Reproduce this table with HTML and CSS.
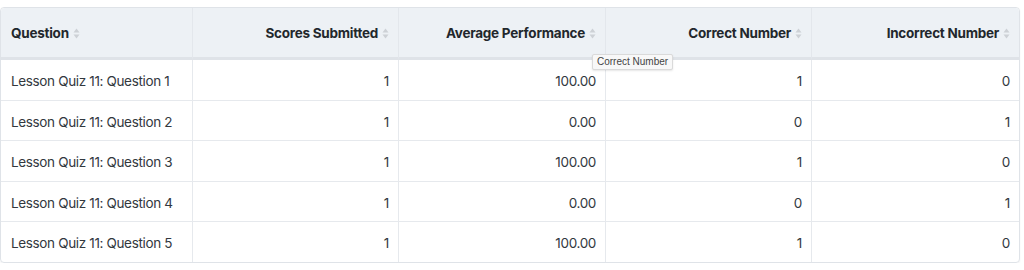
FILE: index.html
```html
<!DOCTYPE html>
<html>
<head>
<meta charset="utf-8">
<link rel="stylesheet" href="styles.css">
</head>
<body>
<div class="wrap">
  <table class="grid">
    <colgroup>
      <col class="c1"><col class="c2"><col class="c3"><col class="c4"><col class="c5">
    </colgroup>
    <thead>
      <tr>
        <th class="left">Question <span class="sort"><svg width="7" height="11" viewBox="0 0 7 11"><path d="M3.5 0.5L6.5 4.5H0.5Z M3.5 10.5L6.5 6.5H0.5Z" fill="#cdd1d6"/></svg></span></th>
        <th>Scores Submitted <span class="sort"><svg width="7" height="11" viewBox="0 0 7 11"><path d="M3.5 0.5L6.5 4.5H0.5Z M3.5 10.5L6.5 6.5H0.5Z" fill="#cdd1d6"/></svg></span></th>
        <th>Average Performance <span class="sort"><svg width="7" height="11" viewBox="0 0 7 11"><path d="M3.5 0.5L6.5 4.5H0.5Z M3.5 10.5L6.5 6.5H0.5Z" fill="#cdd1d6"/></svg></span></th>
        <th class="tipcell">Correct Number <span class="sort"><svg width="7" height="11" viewBox="0 0 7 11"><path d="M3.5 0.5L6.5 4.5H0.5Z M3.5 10.5L6.5 6.5H0.5Z" fill="#cdd1d6"/></svg></span><span class="tooltip">Correct Number</span></th>
        <th>Incorrect Number <span class="sort"><svg width="7" height="11" viewBox="0 0 7 11"><path d="M3.5 0.5L6.5 4.5H0.5Z M3.5 10.5L6.5 6.5H0.5Z" fill="#cdd1d6"/></svg></span></th>
      </tr>
    </thead>
    <tbody>
      <tr><td class="left">Lesson Quiz 11: Question 1</td><td>1</td><td>100.00</td><td>1</td><td>0</td></tr>
      <tr><td class="left">Lesson Quiz 11: Question 2</td><td>1</td><td>0.00</td><td>0</td><td>1</td></tr>
      <tr><td class="left">Lesson Quiz 11: Question 3</td><td>1</td><td>100.00</td><td>1</td><td>0</td></tr>
      <tr><td class="left">Lesson Quiz 11: Question 4</td><td>1</td><td>0.00</td><td>0</td><td>1</td></tr>
      <tr><td class="left">Lesson Quiz 11: Question 5</td><td>1</td><td>100.00</td><td>1</td><td>0</td></tr>
    </tbody>
  </table>
</div>
</body>
</html>
```

FILE: styles.css
```css
html, body {
  margin: 0;
  padding: 0;
  background: #ffffff;
}
body {
  font-family: Inter, "Liberation Sans", sans-serif;
  font-size: 13.5px;
  letter-spacing: -0.35px;
  color: #32383e;
}
.wrap {
  padding: 7px 6px 0 0;
}
.grid {
  width: 1019px;
  border-collapse: separate;
  border-spacing: 0;
  table-layout: fixed;
  border: 1px solid #dfe3e8;
  border-radius: 4px;
  box-shadow: 0 1px 2px rgba(0,0,0,0.06);
}
.c1 { width: 192px; }
.c2 { width: 206px; }
.c3 { width: 207px; }
.c4 { width: 206px; }
.c5 { width: 207px; }
th {
  background: #edf1f5;
  height: 49px;
  padding: 0 9px 0 10px;
  text-align: right;
  font-weight: 700;
  letter-spacing: -0.25px;
  color: #22272c;
  border-bottom: 3px solid #dfe3e8;
  border-right: 1px solid #e3e7ec;
  white-space: nowrap;
}
th:first-child { border-top-left-radius: 4px; }
th:last-child { border-top-right-radius: 4px; border-right: none; }
td {
  height: 36.5px;
  padding: 3px 9px 0 10px;
  text-align: right;
  border-bottom: 1px solid #e6e9ed;
  border-right: 1px solid #e6e9ed;
  white-space: nowrap;
}
td:last-child { border-right: none; }
tbody tr:last-child td { border-bottom: none; }
.left { text-align: left; }
.sort {
  display: inline-block;
  vertical-align: -1px;
  margin-left: 1px;
}
.sort svg { display: block; }
.tipcell { position: relative; }
.tooltip {
  position: absolute;
  left: -14px;
  top: 46px;
  background: #f8f8f8;
  border: 1px solid #dadada;
  border-radius: 2px;
  box-shadow: 0 1px 2px rgba(0,0,0,0.1);
  padding: 1px 4px 2px 4px;
  font-family: "Liberation Sans", sans-serif;
  font-size: 10px;
  letter-spacing: 0;
  font-weight: 400;
  color: #444;
  text-align: left;
  z-index: 2;
}
```
